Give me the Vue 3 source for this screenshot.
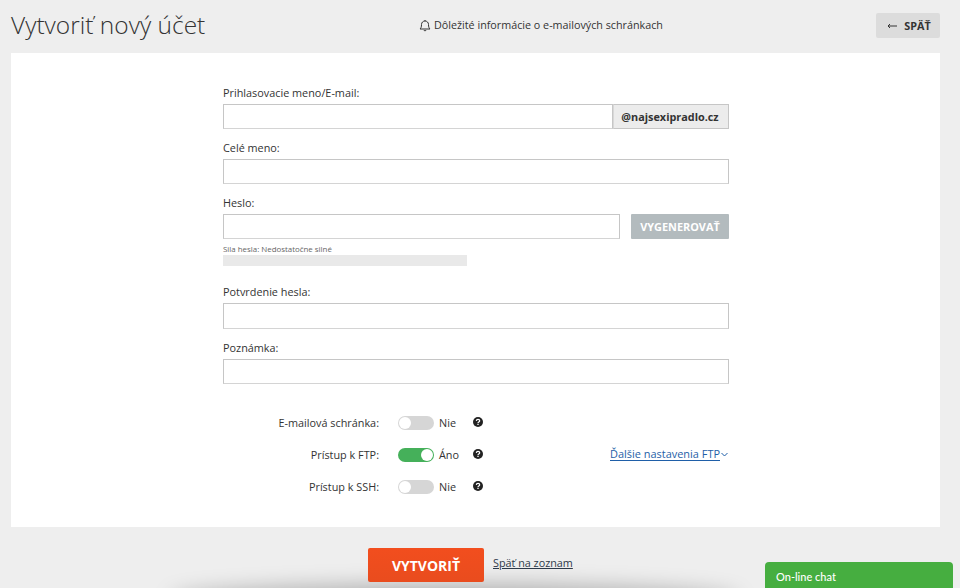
<script setup>
const rows = [
  { label: 'E-mailová schránka:', on: false, text: 'Nie' },
  { label: 'Prístup k FTP:', on: true, text: 'Áno', more: 'Ďalšie nastavenia FTP' },
  { label: 'Prístup k SSH:', on: false, text: 'Nie' }
]
</script>

<template>
  <div class="page">
    <header class="head">
      <h1>Vytvoriť nový účet</h1>
      <a class="notice">
        <svg width="12" height="13" viewBox="0 0 12 13" fill="none" stroke="#333" stroke-width="1">
          <path d="M1 10h10c-1-1-1.500-2-1.500-4.500C9.500 3.500 8 2 6 2S2.500 3.500 2.500 5.500C2.500 8 2 9 1 10Z" />
          <path d="M4.800 11a1.300 1.300 0 0 0 2.400 0M6 1v1" />
        </svg>
        Dôležité informácie o e-mailových schránkach
      </a>
      <button class="back" type="button">
        <svg class="arrow" width="10" height="6" viewBox="0 0 10 6" fill="none" stroke="#333" stroke-width="1"><path d="M10 3H1M3 1L1 3l2 2" /></svg>SPÄŤ
      </button>
    </header>

    <main class="card">
      <form class="form" @submit.prevent>
        <div class="field">
          <label>Prihlasovacie meno/E-mail:</label>
          <div class="group">
            <input class="input grow" />
            <span class="addon">@najsexipradlo.cz</span>
          </div>
        </div>
        <div class="field">
          <label>Celé meno:</label>
          <input class="input" />
        </div>
        <div class="field pass">
          <label>Heslo:</label>
          <div class="pass-row">
            <input class="input grow" />
            <button class="gen" type="button">VYGENEROVAŤ</button>
          </div>
          <div class="strength">Sila hesla: Nedostatočne silné</div>
          <div class="bar"></div>
        </div>
        <div class="field">
          <label>Potvrdenie hesla:</label>
          <input class="input tall" />
        </div>
        <div class="field">
          <label>Poznámka:</label>
          <input class="input" />
        </div>

        <div class="switches">
          <div v-for="r in rows" :key="r.label" class="row">
            <span class="row-label">{{ r.label }}</span>
            <span class="toggle" :class="{ on: r.on }"><i></i></span>
            <span class="state">{{ r.text }}</span>
            <svg class="help" width="10" height="10" viewBox="0 0 10 10">
              <circle cx="5" cy="5" r="5" fill="#222" />
              <path d="M3.300 3.900C3.400 2.900 4.100 2.400 5 2.400c1 0 1.700.6 1.700 1.400 0 1.300-1.700 1.200-1.700 2.300" fill="none" stroke="#fff" stroke-width="1.200" />
              <rect x="4.350" y="6.700" width="1.300" height="1.300" fill="#fff" />
            </svg>
            <a v-if="r.more" class="more"><span>{{ r.more }}</span>
              <svg width="7" height="5" viewBox="0 0 7 5" fill="none" stroke="#1f5fa8" stroke-width="1"><path d="M.5 1l3 3 3-3" /></svg>
            </a>
          </div>
        </div>
      </form>
    </main>

    <footer class="foot">
      <button class="create" type="button">VYTVORIŤ</button>
      <a class="list">Späť na zoznam</a>
    </footer>

    <div class="shadow"></div>
    <div class="chat">On-line chat</div>
  </div>
</template>

<style>
html, body { margin: 0; background: #eeeeee; }
</style>

<style scoped>
.page {
  position: relative;
  width: 960px;
  height: 588px;
  overflow: hidden;
  background: #eeeeee;
  font-family: "Open Sans", "Liberation Sans", sans-serif;
  color: #2b2b2b;
  font-size: 10.850px;
}
.head {
  height: 53px;
  display: flex;
  align-items: center;
  padding: 0 20px 3px 11px;
  box-sizing: border-box;
}
h1 {
  margin: 0;
  font-size: 24.500px;
  font-weight: 300;
  color: #333;
  line-height: 1;
  width: 408px;
  flex: none;
}
.notice { display: flex; align-items: center; gap: 3px; font-size: 10.750px; color: #333; }
.back {
  margin-left: auto;
  width: 64px;
  height: 25px;
  margin-top: 1px;
  border: 0;
  border-radius: 2px;
  background: #dcdcdc;
  font: 700 10.800px "Open Sans", sans-serif;
  color: #333;
  padding: 0 0 0 2px;
  display: flex;
  align-items: center;
  justify-content: center;
}
.arrow { margin-right: 7px; }
.card {
  margin: 0 20px 0 11px;
  height: 474px;
  background: #fff;
  padding: 32px 0 0 212px;
  box-sizing: border-box;
}
.form { width: 506px; }
.field { margin-bottom: 11px; }
.field.pass { margin-bottom: 18px; }
label {
  display: block;
  height: 19px;
  line-height: 15px;
  font-size: 10.850px;
  color: #333;
}
.input {
  display: block;
  width: 100%;
  height: 25px;
  box-sizing: border-box;
  border: 1px solid #c6c6c6;
  border-bottom-color: #d4d4d4;
  background: #fff;
  border-radius: 0;
  padding: 0 8px;
  outline: none;
}
.input.tall { height: 26px; }
.group { display: flex; }
.pass-row { display: flex; gap: 11px; }
.grow { flex: 1; width: auto; min-width: 0; }
.addon {
  flex: none;
  width: 116px;
  height: 25px;
  box-sizing: border-box;
  border: 1px solid #c6c6c6;
  border-left: 1px solid #d8d8d8;
  background: #ececec;
  font-weight: 700;
  font-size: 10.850px;
  line-height: 23px;
  text-align: center;
  color: #333;
  padding-right: 2px;
}
.gen {
  width: 98px;
  height: 25px;
  border: 0;
  border-radius: 1px;
  background: #b3bbbe;
  color: #fff;
  font: 700 10.900px "Open Sans", sans-serif;
  padding: 0;
}
.strength { font-size: 7.900px; color: #666; height: 10px; line-height: 10px; margin-top: 5px; margin-bottom: 1px; }
.bar { width: 244px; height: 11px; background: #e9e9e9; }
.switches { margin-top: 22px; }
.row {
  display: flex;
  align-items: center;
  height: 32px;
  position: relative;
}
.row-label { width: 156px; text-align: right; margin-right: 19px; color: #333; }
.toggle {
  position: relative;
  width: 36px;
  height: 14px;
  margin-top: 2px;
  border-radius: 7px;
  background: #d6d6d6;
}
.toggle i {
  position: absolute;
  left: 1px;
  top: 1px;
  width: 12px;
  height: 12px;
  border-radius: 50%;
  background: #fff;
}
.toggle.on { background: #45b05a; }
.toggle.on i { left: 23px; }
.state { width: 34px; margin-left: 5px; color: #333; }
.more {
  margin-left: auto;
  margin-right: 1px;
  display: flex;
  align-items: center;
  gap: 1px;
  color: #1f5fa8;
  font-size: 10.950px;
}
.more span { border-bottom: 1px solid #1f5fa8; line-height: 13px; }
.foot {
  display: flex;
  align-items: center;
  padding: 21px 0 0 368px;
}
.create {
  width: 116px;
  height: 34px;
  border: 0;
  border-radius: 2px;
  background: linear-gradient(#f24e1e, #e94c1e);
  color: #fff;
  font: 700 14px "Open Sans", sans-serif;
  padding: 0;
}
.list {
  margin: -5px 0 0 9px;
  color: #2d3a4a;
  text-decoration: underline;
  font-size: 10.800px;
}
.shadow {
  position: absolute;
  left: 170px;
  top: 584px;
  width: 570px;
  height: 30px;
  background: rgba(0, 0, 0, 0.25);
  filter: blur(10px);
  border-radius: 50%;
  z-index: 0;
}
.create, .list { position: relative; z-index: 1; }
.chat {
  position: absolute;
  left: 765px;
  top: 562px;
  width: 188px;
  height: 26px;
  box-sizing: border-box;
  padding: 8px 0 0 11px;
  background: #46ae40;
  border-radius: 4px 4px 0 0;
  color: #fff;
  font: 500 11px/14px Lato, sans-serif;
}
</style>
